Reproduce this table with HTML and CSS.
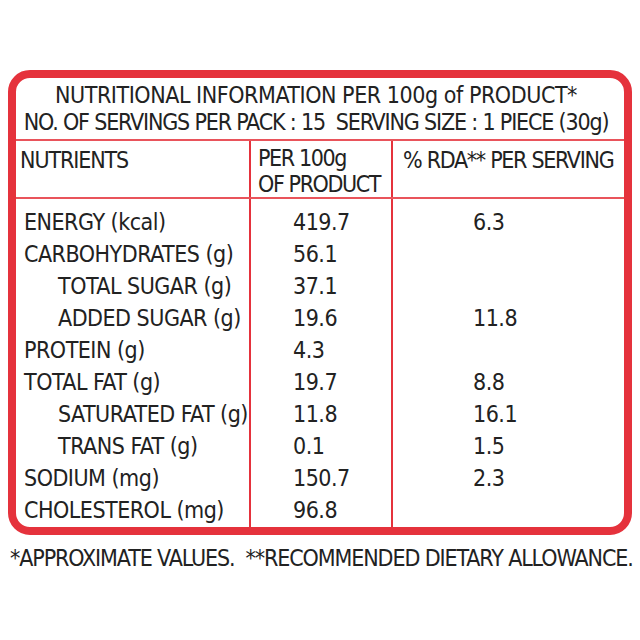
FILE: index.html
```html
<!DOCTYPE html>
<html>
<head>
<meta charset="utf-8">
<link rel="stylesheet" href="styles.css">
</head>
<body>
<div class="label">
  <div class="title">
    <div class="t1">NUTRITIONAL INFORMATION PER 100g of PRODUCT*</div>
    <div class="t2">NO. OF SERVINGS PER PACK : 15&nbsp;&nbsp;SERVING SIZE : 1 PIECE (30g)</div>
  </div>
  <div class="grid head">
    <div class="c1">NUTRIENTS</div>
    <div class="c2">PER 100g<br>OF PRODUCT</div>
    <div class="c3">% RDA** PER SERVING</div>
  </div>
  <div class="grid body">
    <div class="c1">
      <div class="r">ENERGY (kcal)</div>
      <div class="r">CARBOHYDRATES (g)</div>
      <div class="r in">TOTAL SUGAR (g)</div>
      <div class="r in">ADDED SUGAR (g)</div>
      <div class="r">PROTEIN (g)</div>
      <div class="r">TOTAL FAT (g)</div>
      <div class="r in">SATURATED FAT (g)</div>
      <div class="r in">TRANS FAT (g)</div>
      <div class="r">SODIUM (mg)</div>
      <div class="r">CHOLESTEROL (mg)</div>
    </div>
    <div class="c2">
      <div class="r">419.7</div>
      <div class="r">56.1</div>
      <div class="r">37.1</div>
      <div class="r">19.6</div>
      <div class="r">4.3</div>
      <div class="r">19.7</div>
      <div class="r">11.8</div>
      <div class="r">0.1</div>
      <div class="r">150.7</div>
      <div class="r">96.8</div>
    </div>
    <div class="c3">
      <div class="r">6.3</div>
      <div class="r"></div>
      <div class="r"></div>
      <div class="r">11.8</div>
      <div class="r"></div>
      <div class="r">8.8</div>
      <div class="r">16.1</div>
      <div class="r">1.5</div>
      <div class="r">2.3</div>
      <div class="r"></div>
    </div>
  </div>
</div>
<div class="foot">*APPROXIMATE VALUES.&nbsp;&nbsp;**RECOMMENDED DIETARY ALLOWANCE.</div>
</body>
</html>
```
FILE: styles.css
```css
html, body { margin: 0; padding: 0; background: #fff; }
body {
  font-family: "DejaVu Sans Condensed", "DejaVu Sans", sans-serif;
  font-stretch: condensed;
  color: #222;
  font-size: 23px;
  padding: 70px 8px 0 8px;
  white-space: nowrap;
}
.label {
  width: 608px;
  border: 8px solid #e5323c;
  border-radius: 22px;
  box-sizing: content-box;
}
.title {
  height: 61px;
  padding-right: 8px;
  border-bottom: 2px solid #e9545b;
  text-align: center;
  display: flex;
  flex-direction: column;
  justify-content: center;
  line-height: 27px;
}
.t1 { letter-spacing: -0.45px; }
.t2 { letter-spacing: -1.17px; }
.grid {
  display: grid;
  grid-template-columns: 233px 144px 1fr;
}
.head {
  height: 56px;
  border-bottom: 2px solid #e9545b;
  line-height: 22px;
  letter-spacing: -1.1px;
}
.head > div { padding-top: 8px; }
.head .c1 { padding-left: 4px; }
.head .c2 { padding-left: 7px; padding-top: 4px; line-height: 26px; letter-spacing: -1.4px; }
.head .c3 { padding-left: 10px; letter-spacing: -1.3px; }
.c2 { border-left: 2px solid #e5323c; border-right: 2px solid #e5323c; }
.body > div { padding: 7px 0 1px; }
.body .r { height: 32px; line-height: 32px; letter-spacing: -0.5px; }
.body .c1 .r { padding-left: 8px; }
.body .c1 .in { padding-left: 42px; }
.body .c2 .r { padding-left: 42px; }
.body .c3 .r { padding-left: 80px; }
.foot {
  margin-top: 10px;
  padding-left: 2px;
  letter-spacing: -1.1px;
}
```
